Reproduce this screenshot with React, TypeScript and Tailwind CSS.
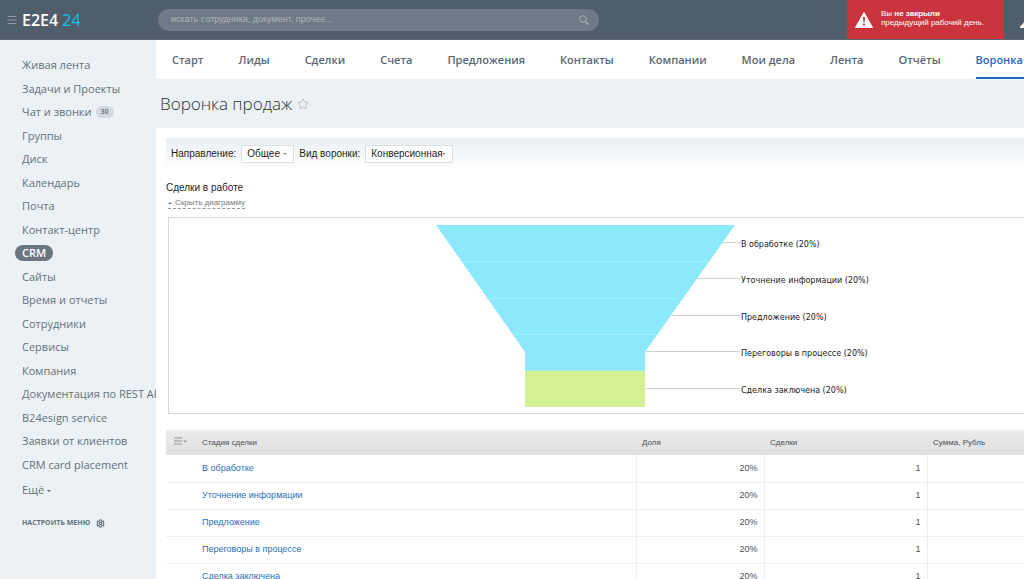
import { useState } from "react";
import { Menu, Settings, Star } from "lucide-react";

const MENU = [
  { title: "Живая лента" },
  { title: "Задачи и Проекты" },
  { title: "Чат и звонки", count: 30 },
  { title: "Группы" },
  { title: "Диск" },
  { title: "Календарь" },
  { title: "Почта" },
  { title: "Контакт-центр" },
  { title: "CRM", active: true },
  { title: "Сайты" },
  { title: "Время и отчеты" },
  { title: "Сотрудники" },
  { title: "Сервисы" },
  { title: "Компания" },
  { title: "Документация по REST API" },
  { title: "B24esign service" },
  { title: "Заявки от клиентов" },
  { title: "CRM card placement" },
];

const TABS = [
  "Старт",
  "Лиды",
  "Сделки",
  "Счета",
  "Предложения",
  "Контакты",
  "Компании",
  "Мои дела",
  "Лента",
  "Отчёты",
  "Воронка продаж",
];

// lineFrom is where the leader line leaves the funnel edge
const STAGES = [
  { title: "В обработке", share: 20, deals: 1, y: 25, lineFrom: 554 },
  { title: "Уточнение информации", share: 20, deals: 1, y: 61, lineFrom: 528 },
  { title: "Предложение", share: 20, deals: 1, y: 98, lineFrom: 503 },
  { title: "Переговоры в процессе", share: 20, deals: 1, y: 134, lineFrom: 477 },
  { title: "Сделка заключена", share: 20, deals: 1, y: 171, lineFrom: 477 },
];

const Header = () => (
  <header className="flex h-10 items-center overflow-hidden border-b border-[#5f6775] bg-[#505d6a]">
    <div className="flex w-[158px] shrink-0 items-center pl-[6px]">
      <button type="button" aria-label="Меню" className="text-[#929aa3]">
        <Menu className="h-3 w-3" strokeWidth={2} />
      </button>
      <a href="#" className="ml-1 text-base leading-5 font-semibold text-white">
        E2E4 <span className="font-normal text-[#14c0ee]">24</span>
      </a>
    </div>
    <form className="flex h-[22px] min-w-0 grow max-w-[441px] items-center rounded-full bg-[#6f7a86] pr-[10px] pl-[13px]">
      <input
        type="search"
        aria-label="Поиск"
        placeholder="искать сотрудника, документ, прочее..."
        className="min-w-0 grow bg-transparent font-['Liberation_Sans',sans-serif] text-[9px] text-white outline-none placeholder:text-[#adb4bb]"
      />
      <button type="submit" aria-label="Найти" className="text-[#a9b0b7]">
        <svg viewBox="0 0 10 10" className="h-[10px] w-[10px]" fill="none" stroke="currentColor">
          <circle cx="4" cy="4" r="3.3" strokeWidth="1" />
          <path d="M6.5 6.5 9.3 9.3" strokeWidth="1.7" />
        </svg>
      </button>
    </form>
    <div className="ml-auto flex h-10 w-[157px] shrink-0 items-center bg-[#ca353d] pl-2 font-['Liberation_Sans',sans-serif] text-[8px] leading-[9px] text-white">
      <svg viewBox="0 0 18 16" className="mr-2 h-4 w-[18px] shrink-0">
        <path d="M9 .5 17.5 15.5H.5Z" fill="#fff" stroke="#fff" strokeLinejoin="round" />
        <path d="M8 5h2l-.4 5.5H8.400Z" fill="#ca353d" />
        <circle cx="9" cy="12.700" r="1.100" fill="#ca353d" />
      </svg>
      <p className="pb-1">
        Вы <b>не закрыли</b>
        <br />
        предыдущий рабочий день.
      </p>
    </div>
    <div className="flex w-5 shrink-0 overflow-hidden pt-2 pl-4">
      <svg viewBox="0 0 14 8" className="h-2 w-[14px] shrink-0">
        <path d="M0 8C0 5 3 5 4 2L5 0H9L10 2C11 5 14 5 14 8Z" fill="#fff" />
      </svg>
    </div>
  </header>
);

const Sidebar = () => (
  <aside className="w-[156px] shrink-0 pt-4 pl-[15px] text-[11px] text-[#65717c]">
    <ul className="flex h-[418px] flex-col justify-between">
      {MENU.map((item) => (
        <li key={item.title} className="flex h-[18px] items-center">
          <a
            href="#"
            className={
              item.active
                ? "rounded-full bg-[#6b7681] px-[7px] leading-4 font-semibold text-white"
                : "px-[7px] leading-4 whitespace-nowrap"
            }
          >
            {item.title}
          </a>
          {item.count && (
            <span className="-ml-[3px] rounded-full bg-[#d3dae0] px-[5px] text-[7px] leading-3 font-semibold">
              {item.count}
            </span>
          )}
        </li>
      ))}
    </ul>
    <button type="button" className="mt-2 flex items-center gap-[3px] pl-[7px] leading-4">
      Ещё
      <svg viewBox="0 0 4 2" className="mt-px h-[2px] w-1">
        <path d="M0 0H4L2 2Z" fill="currentColor" />
      </svg>
    </button>
    <button
      type="button"
      className="mt-[19px] flex items-center gap-[6px] pl-[7px] text-[7px] leading-3 font-bold whitespace-nowrap uppercase"
    >
      Настроить меню
      <Settings className="h-[9px] w-[9px]" strokeWidth={3} />
    </button>
  </aside>
);

type FilterProps = {
  id: string;
  label: string;
  options: string[];
  width: string;
};

const Filter = ({ id, label, options, width }: FilterProps) => (
  <div className="flex items-center gap-[5px]">
    <label htmlFor={id}>{label}</label>
    <div className={`relative ${width}`}>
      <select
        id={id}
        className="h-[18px] w-full appearance-none border border-[#dce0e3] bg-white px-[5px] outline-none"
      >
        {options.map((option) => (
          <option key={option}>{option}</option>
        ))}
      </select>
      <svg viewBox="0 0 4 2" className="pointer-events-none absolute top-2 right-[7px] h-[2px] w-1">
        <path d="M0 0H4L2 2Z" fill="#8b9197" />
      </svg>
    </div>
  </div>
);

const Funnel = () => (
  <div className="ml-[2px] overflow-hidden border border-r-0 border-[#d5dadd]">
    <svg width="860" height="195" viewBox="0 0 860 195" className="block">
      <path d="M267 7H566L476 134V153H356V134Z" fill="#8ce9fc" />
      <path d="M356 153H476V189H356Z" fill="#d3f093" />
      <path
        d="M292 43.500H541M318 80.500H515M344 116.500H489M356 152.500H476"
        stroke="#a4eefc"
        strokeWidth="1"
      />
      {STAGES.map((stage) => (
        <g key={stage.title}>
          <path d={`M${stage.lineFrom} ${stage.y - 0.5}H571`} stroke="#cfcfcf" />
          <text
            x="572"
            y={stage.y + 4}
            fill="#222"
            className="font-['DejaVu_Sans',sans-serif] text-[8px]"
          >
            {stage.title} ({stage.share}%)
          </text>
        </g>
      ))}
    </svg>
  </div>
);

const StageTable = () => (
  <table className="mt-4 w-full table-fixed border-collapse text-[9px] text-[#4c4f52]">
    <thead>
      <tr className="h-[25px] bg-linear-to-b from-[#ececec] to-[#dfdfdf] text-left text-[8px]">
        <th className="w-[30px] pb-1 pl-2 font-normal">
          <button type="button" aria-label="Настройка колонок" className="block text-[#909090]">
            <svg viewBox="0 0 13 8" className="h-2 w-[13px]">
              <path d="M0 1H8M0 4H8M0 7H8" stroke="currentColor" strokeWidth="1" />
              <path d="M9 3.500H13L11 5.500Z" fill="currentColor" />
            </svg>
          </button>
        </th>
        <th className="px-[6px] font-normal">Стадия сделки</th>
        <th className="w-32 px-[6px] font-normal">Доля</th>
        <th className="w-[163px] px-[6px] font-normal">Сделки</th>
        <th className="w-[97px] px-[6px] font-normal">Сумма, Рубль</th>
      </tr>
    </thead>
    <tbody>
      {STAGES.map((stage) => (
        <tr key={stage.title} className="h-[27px] border-b border-[#edefef]">
          <td />
          <td className="px-[6px]">
            <a href="#" className="text-[#1f6fb8]">
              {stage.title}
            </a>
          </td>
          <td className="border-l border-[#edefef] px-[6px] text-right">{stage.share}%</td>
          <td className="border-l border-[#edefef] px-[6px] text-right">{stage.deals}</td>
          <td className="border-l border-[#edefef]" />
        </tr>
      ))}
    </tbody>
  </table>
);

export default function App() {
  const [tab, setTab] = useState("Воронка продаж");
  const [chartOpen, setChartOpen] = useState(true);

  return (
    <div className="h-screen overflow-hidden bg-[#ebf1f4] font-['Open_Sans',sans-serif]">
      <Header />
      <div className="flex">
        <Sidebar />
        <main className="min-w-0 grow">
          <nav className="flex h-[39px] gap-[35px] overflow-hidden bg-white px-4 text-[11px] font-semibold text-[#5a6670]">
            {TABS.map((item) => (
              <button
                key={item}
                type="button"
                onClick={() => setTab(item)}
                className={
                  item === tab
                    ? "shrink-0 border-b-2 border-[#1f66bd] pt-1 whitespace-nowrap text-[#1f66bd]"
                    : "shrink-0 border-b-2 border-transparent pt-1 whitespace-nowrap"
                }
              >
                {item}
              </button>
            ))}
          </nav>

          <div className="flex h-[49px] items-center gap-[5px] pl-1">
            <h1 className="text-[17px] leading-6 font-light text-[#2a3138]">Воронка продаж</h1>
            <button type="button" aria-label="В избранное" className="text-[#b9bfc4]">
              <Star className="h-3 w-3" strokeWidth={2} />
            </button>
          </div>

          <section className="bg-white pt-[10px] pl-[10px] font-['Liberation_Sans',sans-serif]">
            <div className="flex h-[31px] items-center gap-[5px] bg-linear-to-b from-[#e9f0f3] to-white pl-[5px] text-[10px] text-[#1d1f21]">
              <Filter id="category" label="Направление:" options={["Общее"]} width="w-[53px]" />
              <Filter
                id="view"
                label="Вид воронки:"
                options={["Конверсионная", "Классическая"]}
                width="w-[88px]"
              />
            </div>

            <h2 className="mt-3 text-[10px] leading-[14px] text-[#1d1f21]">Сделки в работе</h2>
            <div className="mt-[3px] mb-2 flex pl-[2px]">
              <button
                type="button"
                onClick={() => setChartOpen(!chartOpen)}
                className="flex items-center gap-[3px] border-b border-dashed border-[#999] text-[8px] leading-[10px] text-[#76797c]"
              >
                <svg viewBox="0 0 4 2" className="h-[2px] w-1">
                  <path d="M0 2H4L2 0Z" fill="currentColor" />
                </svg>
                {chartOpen ? "Скрыть диаграмму" : "Показать диаграмму"}
              </button>
            </div>

            {chartOpen && <Funnel />}
            <StageTable />
          </section>
        </main>
      </div>
    </div>
  );
}
